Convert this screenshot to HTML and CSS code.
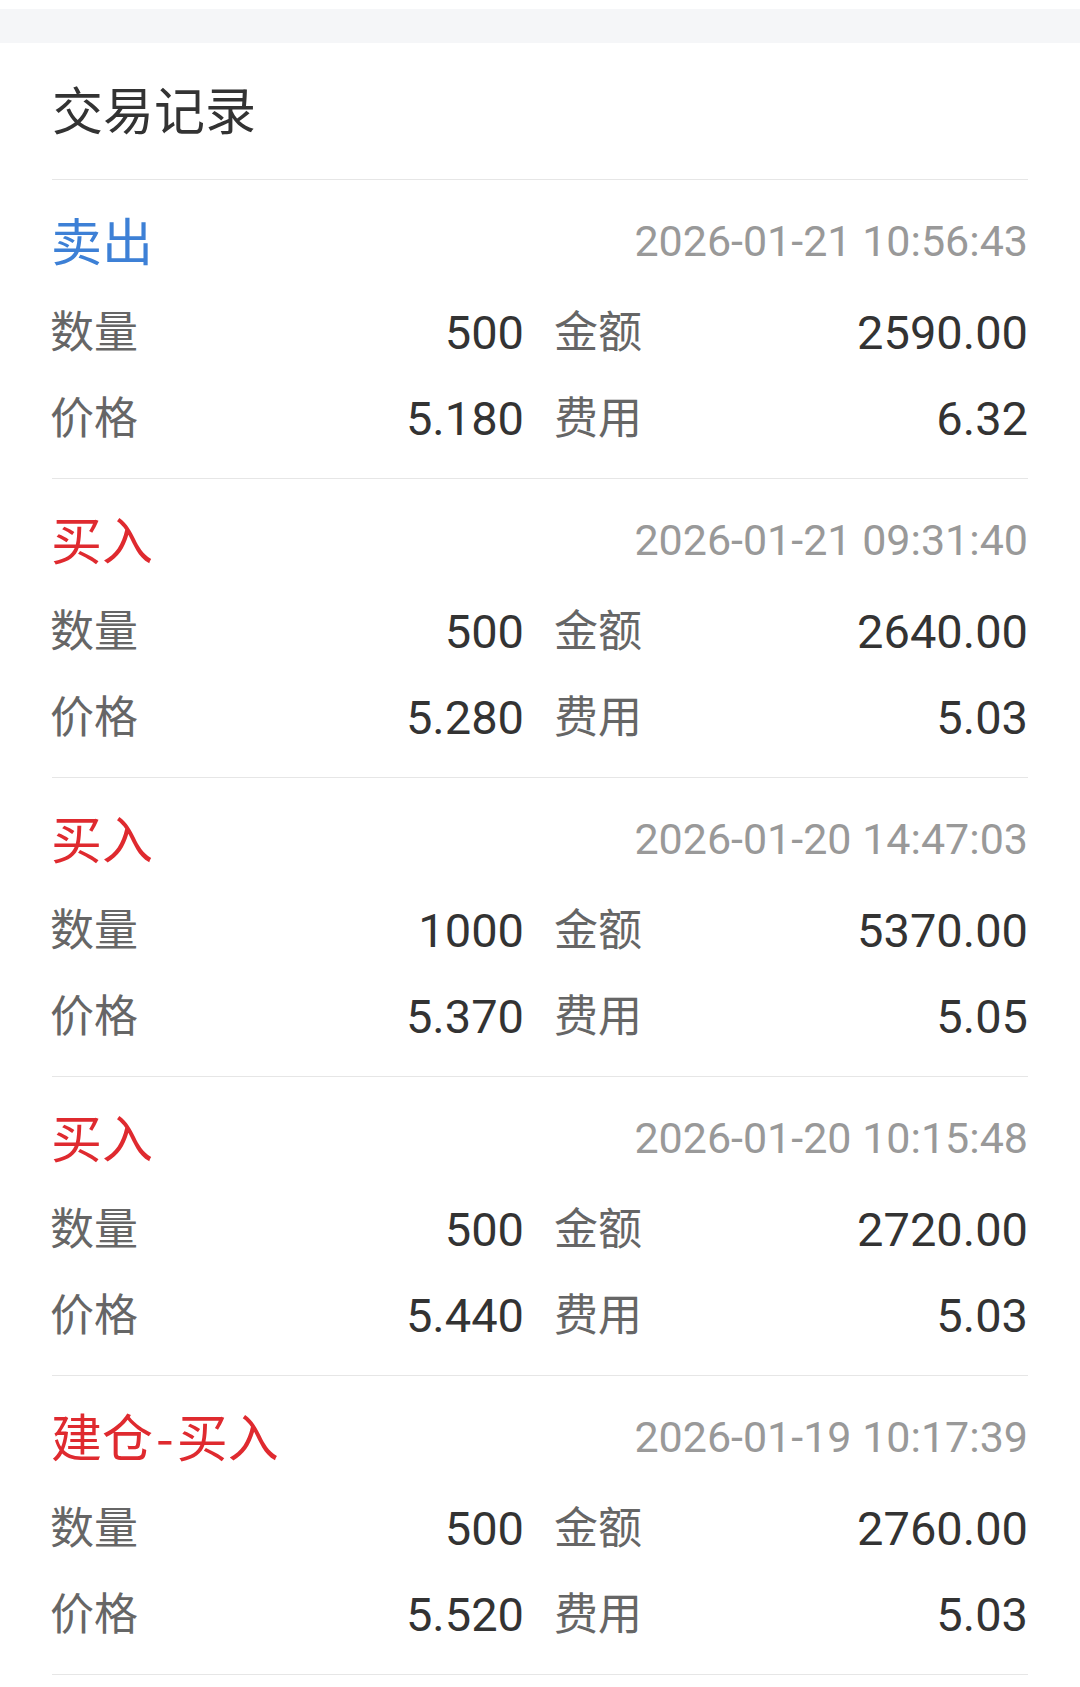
FILE: index.html
```html
<!DOCTYPE html>
<html lang="zh-CN">
<head>
<meta charset="utf-8">
<title>交易记录</title>
<link rel="stylesheet" href="styles.css">
</head>
<body>
<div class="top-space"></div>
<div class="gap-band"></div>
<section class="card">
  <h1 class="card-title">交易记录</h1>
  <div class="record">
    <div class="rec-head"><span class="type sell">卖出</span><span class="time">2026-01-21 10:56:43</span></div>
    <div class="rec-grid">
      <div class="field"><span class="lbl">数量</span><span class="val">500</span></div>
      <div class="field"><span class="lbl">金额</span><span class="val">2590.00</span></div>
      <div class="field"><span class="lbl">价格</span><span class="val">5.180</span></div>
      <div class="field"><span class="lbl">费用</span><span class="val">6.32</span></div>
    </div>
  </div>
  <div class="record">
    <div class="rec-head"><span class="type buy">买入</span><span class="time">2026-01-21 09:31:40</span></div>
    <div class="rec-grid">
      <div class="field"><span class="lbl">数量</span><span class="val">500</span></div>
      <div class="field"><span class="lbl">金额</span><span class="val">2640.00</span></div>
      <div class="field"><span class="lbl">价格</span><span class="val">5.280</span></div>
      <div class="field"><span class="lbl">费用</span><span class="val">5.03</span></div>
    </div>
  </div>
  <div class="record">
    <div class="rec-head"><span class="type buy">买入</span><span class="time">2026-01-20 14:47:03</span></div>
    <div class="rec-grid">
      <div class="field"><span class="lbl">数量</span><span class="val">1000</span></div>
      <div class="field"><span class="lbl">金额</span><span class="val">5370.00</span></div>
      <div class="field"><span class="lbl">价格</span><span class="val">5.370</span></div>
      <div class="field"><span class="lbl">费用</span><span class="val">5.05</span></div>
    </div>
  </div>
  <div class="record">
    <div class="rec-head"><span class="type buy">买入</span><span class="time">2026-01-20 10:15:48</span></div>
    <div class="rec-grid">
      <div class="field"><span class="lbl">数量</span><span class="val">500</span></div>
      <div class="field"><span class="lbl">金额</span><span class="val">2720.00</span></div>
      <div class="field"><span class="lbl">价格</span><span class="val">5.440</span></div>
      <div class="field"><span class="lbl">费用</span><span class="val">5.03</span></div>
    </div>
  </div>
  <div class="record">
    <div class="rec-head"><span class="type buy">建仓<span class="dash">-</span>买入</span><span class="time">2026-01-19 10:17:39</span></div>
    <div class="rec-grid">
      <div class="field"><span class="lbl">数量</span><span class="val">500</span></div>
      <div class="field"><span class="lbl">金额</span><span class="val">2760.00</span></div>
      <div class="field"><span class="lbl">价格</span><span class="val">5.520</span></div>
      <div class="field"><span class="lbl">费用</span><span class="val">5.03</span></div>
    </div>
  </div>
</section>
</body>
</html>
```

FILE: styles.css
```css
html, body {
  margin: 0;
  padding: 0;
  background: #ffffff;
}
body {
  font-family: Roboto, "Noto Sans CJK SC", sans-serif;
  color: #333333;
}
.top-space {
  height: 9px;
  background: #ffffff;
}
.gap-band {
  height: 34px;
  background: #f5f6f8;
}
.card {
  background: #ffffff;
  padding: 0 52px;
}
.card-title {
  margin: 0;
  height: 136px;
  line-height: 140px;
  font-size: 51px;
  font-weight: 400;
  color: #333333;
  border-bottom: 1px solid #e6e6e6;
}
.record {
  padding: 22px 0 16px;
  border-bottom: 1px solid #e6e6e6;
}
.rec-head {
  display: flex;
  justify-content: space-between;
  align-items: center;
  height: 78px;
  margin-bottom: 10px;
}
.type {
  font-family: "Noto Sans CJK SC", sans-serif;
  font-size: 51px;
  line-height: 74px;
  margin-left: -1px;
  margin-bottom: 4px;
}
.dash {
  margin: 0 3px;
}
.sell { color: #3d80d6; }
.buy { color: #df2a2f; }
.time {
  font-size: 43px;
  color: #999999;
  line-height: 78px;
}
.rec-grid {
  display: grid;
  grid-template-columns: 1fr 1fr;
  column-gap: 32px;
  grid-auto-rows: 86px;
}
.field {
  display: flex;
  justify-content: space-between;
  align-items: center;
}
.lbl {
  font-size: 44px;
  color: #666666;
  line-height: 86px;
  margin-left: -2px;
}
.val {
  font-size: 47px;
  color: #333333;
  line-height: 86px;
}
```
